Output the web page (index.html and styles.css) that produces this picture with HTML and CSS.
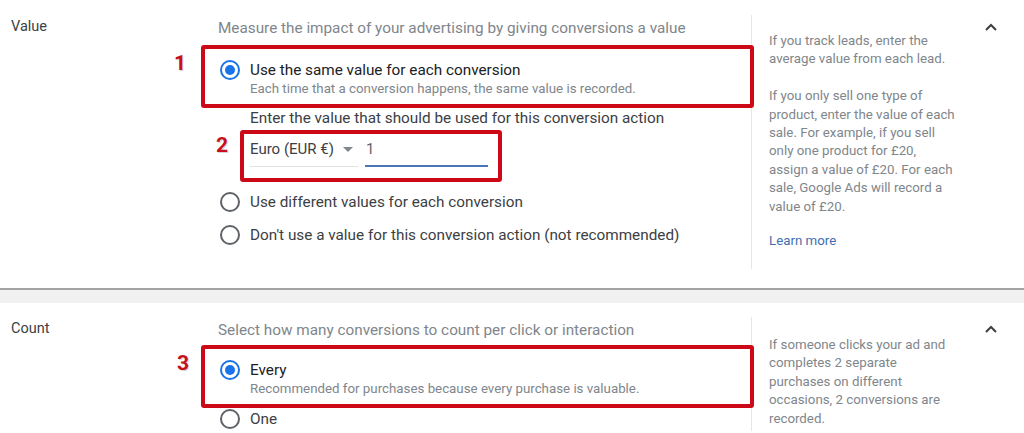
FILE: index.html
```html
<!DOCTYPE html>
<html lang="en">
<head>
<meta charset="utf-8">
<title>Conversion settings</title>
<link rel="stylesheet" href="styles.css">
</head>
<body>
<div class="page">
  <section class="card card-value">
    <div class="label">Value</div>
    <div class="main">
      <p class="desc">Measure the impact of your advertising by giving conversions a value</p>
      <div class="annot annot-wide first">
        <span class="num num-1">1</span>
        <div class="option checked">
          <span class="radio"></span>
          <span class="opt-text">
            <span class="opt-title">Use the same value for each conversion</span>
            <span class="opt-sub">Each time that a conversion happens, the same value is recorded.</span>
          </span>
        </div>
      </div>
      <div class="indent">
        <p class="enter">Enter the value that should be used for this conversion action</p>
        <div class="annot annot-field">
          <span class="num num-2">2</span>
          <div class="field-row">
            <div class="select"><span class="select-text">Euro (EUR €)</span><span class="caret"></span></div>
            <div class="input">1</div>
          </div>
        </div>
      </div>
      <div class="option plain first-plain">
        <span class="radio"></span>
        <span class="opt-title">Use different values for each conversion</span>
      </div>
      <div class="option plain">
        <span class="radio"></span>
        <span class="opt-title">Don't use a value for this conversion action (not recommended)</span>
      </div>
    </div>
    <div class="help help-value">
      <p>If you track leads, enter the average value from each lead.</p>
      <p>If you only sell one type of product, enter the value of each sale. For example, if you sell only one product for £20, assign a value of £20. For each sale, Google Ads will record a value of £20.</p>
      <a class="learn" href="#">Learn more</a>
    </div>
    <div class="toggle">
      <svg width="12" height="8" viewBox="0 0 12 8"><path d="M1 7 L6 2 L11 7" fill="none" stroke="#3c4043" stroke-width="2"/></svg>
    </div>
  </section>
  <div class="gap"></div>
  <section class="card card-count">
    <div class="label">Count</div>
    <div class="main">
      <p class="desc">Select how many conversions to count per click or interaction</p>
      <div class="annot annot-wide second">
        <span class="num num-3">3</span>
        <div class="option checked">
          <span class="radio"></span>
          <span class="opt-text">
            <span class="opt-title">Every</span>
            <span class="opt-sub">Recommended for purchases because every purchase is valuable.</span>
          </span>
        </div>
      </div>
      <div class="option plain one">
        <span class="radio"></span>
        <span class="opt-title">One</span>
      </div>
    </div>
    <div class="help help-count">
      <p>If someone clicks your ad and completes 2 separate purchases on different occasions, 2 conversions are recorded.</p>
    </div>
    <div class="toggle">
      <svg width="12" height="8" viewBox="0 0 12 8"><path d="M1 7 L6 2 L11 7" fill="none" stroke="#3c4043" stroke-width="2"/></svg>
    </div>
  </section>
</div>
</body>
</html>
```
FILE: styles.css
```css
html, body {
  margin: 0;
  padding: 0;
  background: #ffffff;
}
body {
  font-family: Roboto, "Liberation Sans", Arial, sans-serif;
  color: #3c4043;
  overflow: hidden;
  width: 1024px;
  height: 433px;
}
p { margin: 0; }

.card {
  display: flex;
  align-items: stretch;
  padding-top: 15px;
  background: #fff;
}
.card-value {
  padding-bottom: 19px;
}
.card-count {
  padding-top: 14px;
}
.label {
  width: 218px;
  box-sizing: border-box;
  padding-left: 11px;
  padding-top: 1px;
  font-size: 14.5px;
  line-height: 22px;
  color: #3c4043;
}
.main {
  width: 533px;
  flex: none;
}
.desc {
  font-size: 15.3px;
  line-height: 24px;
  color: #80868b;
  margin-top: 1px;
}
.annot {
  position: relative;
}
.annot::after {
  content: "";
  position: absolute;
  border: 4px solid #cc0a17;
  border-radius: 3px;
  pointer-events: none;
}
.annot-wide::after {
  left: -17px;
  right: -3px;
  top: -15px;
  bottom: -10px;
}
.annot-wide.first { margin-top: 20px; }
.annot-wide.second { margin-top: 18px; }

.num {
  position: absolute;
  font-size: 21px;
  font-weight: 700;
  line-height: 24px;
  color: #c8101c;
  text-shadow: 1px 1px 0 #d6d6d6;
}
.num-1 { left: -44px; top: -9px; }
.num-2 { left: -34px; top: -3px; }
.num-3 { left: -41px; top: -9px; }

.option {
  display: flex;
  align-items: flex-start;
  padding-left: 2px;
}
.radio {
  flex: none;
  width: 20px;
  height: 20px;
  box-sizing: border-box;
  border: 2px solid #5f6368;
  border-radius: 50%;
  margin-right: 10px;
  position: relative;
}
.option.checked .radio {
  border-color: #1a73e8;
}
.option.checked .radio::after {
  content: "";
  position: absolute;
  left: 3px;
  top: 3px;
  width: 10px;
  height: 10px;
  border-radius: 50%;
  background: #1a73e8;
}
.opt-text {
  display: flex;
  flex-direction: column;
}
.opt-title {
  font-size: 15.3px;
  line-height: 20px;
  color: #202124;
}
.opt-sub {
  font-size: 13.3px;
  line-height: 18px;
  color: #80868b;
}
.option.plain {
  align-items: center;
  height: 24px;
}
.option.plain .opt-title {
  color: #3c4043;
}
.first-plain { margin-top: 23px; }
.option.plain + .option.plain { margin-top: 9px; }
.option.one { margin-top: 9px; }

.indent {
  padding-left: 32px;
}
.enter {
  font-size: 15.3px;
  line-height: 20px;
  color: #3c4043;
  margin-top: 10px;
}
.annot-field {
  margin-top: 8px;
  width: 238px;
}
.annot-field::after {
  left: -10px;
  right: -14px;
  top: -6px;
  bottom: -15px;
}
.field-row {
  display: flex;
  align-items: flex-end;
}
.select {
  width: 108px;
  display: flex;
  align-items: center;
  padding: 3px 0 7px;
  border-bottom: 1px solid #e0e0e0;
  font-size: 15px;
  line-height: 20px;
  color: #3c4043;
}
.caret {
  width: 0;
  height: 0;
  border-left: 5px solid transparent;
  border-right: 5px solid transparent;
  border-top: 5px solid #80868b;
  margin-left: 9px;
}
.input {
  margin-left: 7px;
  flex: 1;
  padding: 3px 0 6px 1px;
  border-bottom: 2px solid #4a76b8;
  font-size: 15px;
  line-height: 20px;
  color: #5f6368;
}

.help {
  width: 189px;
  flex: none;
  border-left: 1px solid #e6e6e6;
  padding-left: 17px;
  padding-top: 17px;
  font-size: 13.3px;
  line-height: 18.4px;
  color: #80868b;
}
.help p + p { margin-top: 18.4px; }
.help-value { padding-bottom: 18px; }
.learn {
  display: block;
  margin-top: 15px;
  color: #3f6fb0;
  text-decoration: none;
  line-height: 20px;
}
.help-count {
  padding-top: 19px;
}
.toggle {
  margin-left: auto;
  width: 66px;
  box-sizing: border-box;
  padding-left: 27px;
  padding-top: 8px;
}
.toggle svg { display: block; }

.gap {
  height: 13px;
  border-top: 2px solid #a3a3a3;
  background: #f1f1f1;
}
```
